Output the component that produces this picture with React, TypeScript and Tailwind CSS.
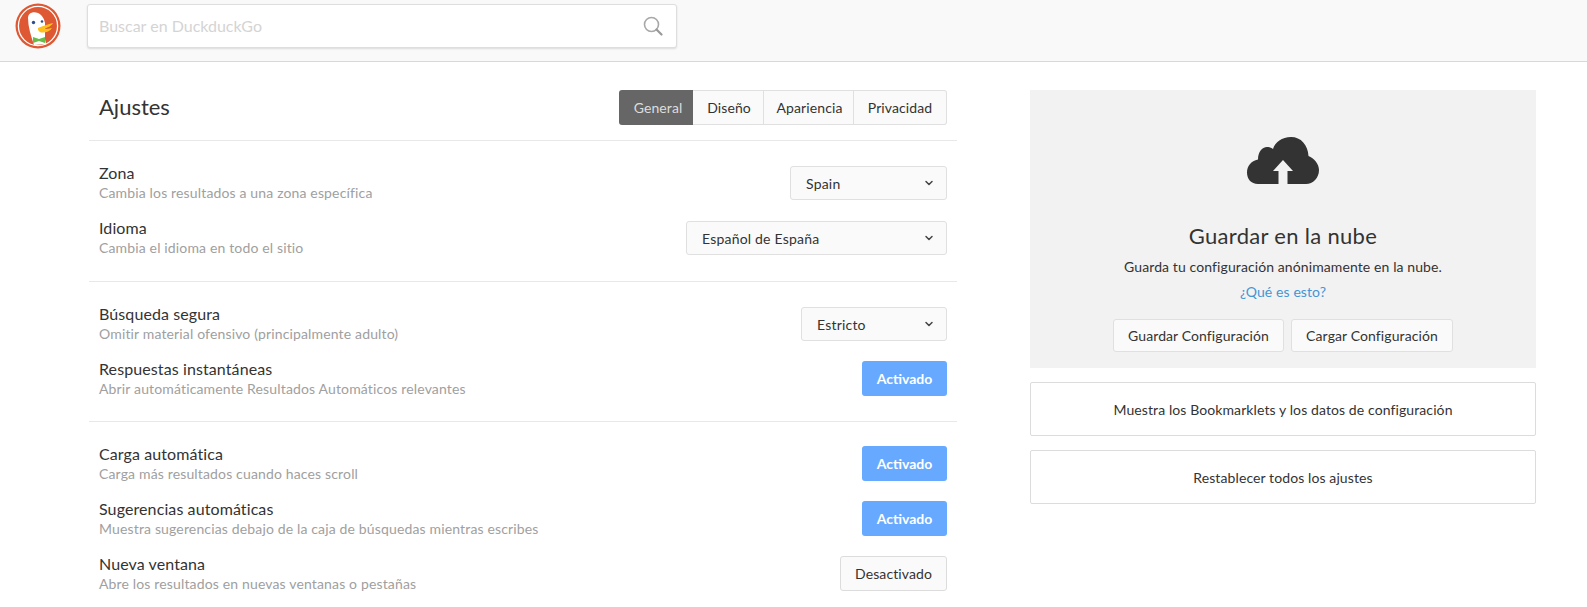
import React from "react";
import { ChevronDown } from "lucide-react";

function Logo() {
  return (
    <svg width="46" height="46" viewBox="0 0 46 46">
      <circle cx="23" cy="23" r="22.500" fill="#de5833" />
      <circle cx="23" cy="23" r="19.600" fill="none" stroke="#fff" strokeWidth="1.300" />
      <path d="M13 15 C13 10 18 8 23 10 C27 12 29 15 30 20 L30 36 L31 41 L19 42 C16 33 13 24 13 15Z" fill="#fff" />
      <circle cx="18.500" cy="19.500" r="1.700" fill="#2d4f8e" />
      <circle cx="27" cy="18.500" r="1.300" fill="#2d4f8e" />
      <path d="M23 25 C28 23 33 21 38 20 C37 22.500 33 24.500 29 26 C32 26 35 25.500 37 25 C35 28.500 30 30 26 29.500 C24 29 22.500 26.500 23 25Z" fill="#fdc018" />
      <path d="M18 34 L24 36 L30 34 L30 40 L24 38 L18 40Z" fill="#65bc46" />
    </svg>
  );
}

function Dropdown({ label, width }: { label: string; width: string }) {
  return (
    <div className={`${width} mt-[1px] h-[34px] flex items-center justify-between pl-[15px] pr-[11px] bg-[#fafafa] border border-[#e0e0e0] rounded-[3px] text-[14px] tracking-[0.2px] text-[#333]`}>
      <span>{label}</span>
      <ChevronDown size={12} strokeWidth={3} className="text-[#444]" />
    </div>
  );
}

function Toggle({ on }: { on: boolean }) {
  return on ? (
    <div className="w-[85px] h-[35px] flex items-center justify-center bg-[#66a9ff] rounded-[3px] text-[14px] font-bold tracking-normal text-white">Activado</div>
  ) : (
    <div className="w-[107px] h-[35px] flex items-center justify-center bg-[#fafafa] border border-[#dcdcdc] rounded-[3px] text-[14px] tracking-[0.1px] text-[#333]">Desactivado</div>
  );
}

function Row({ title, desc, children }: { title: string; desc: string; children: React.ReactNode }) {
  return (
    <div className="h-[55px] flex items-start justify-between pl-[10px] pr-[10px]">
      <div>
        <div className="text-[16px] leading-[20px] tracking-[0.1px] text-[#333]">{title}</div>
        <div className="text-[14px] leading-[20px] tracking-[0.15px] text-[#a0a0a0]">{desc}</div>
      </div>
      <div className="pt-[2px]">{children}</div>
    </div>
  );
}

const tabs = ["Diseño", "Apariencia", "Privacidad"];

export default function App() {
  return (
    <div className="w-[1587px] h-[607px] overflow-hidden bg-white font-['Lato','Liberation_Sans',sans-serif] tracking-[0.1px]">
      <header className="h-[62px] bg-[#f9f9f9] border-b border-[#d8d8d8] flex pl-[15px] pt-[3px]">
        <Logo />
        <div className="ml-[26px] mt-[1px] w-[590px] h-[44px] bg-white border border-[#dedede] rounded-[3px] shadow-[0_1px_2px_rgba(0,0,0,0.12)] flex items-center justify-between pl-[11px] pr-[13px]">
          <span className="text-[16px] tracking-normal text-[#d4d4d4]">Buscar en DuckduckGo</span>
          <svg width="20" height="20" viewBox="0 0 20 20" fill="none">
            <circle cx="8.500" cy="8.500" r="7" stroke="#a8a8a8" strokeWidth="1.600" />
            <path d="M13.500 13.500 L18.500 18.500" stroke="#9a9a9a" strokeWidth="2.200" strokeLinecap="round" />
          </svg>
        </div>
      </header>

      <main className="flex pl-[89px] pt-[28px]">
        <section className="w-[868px]">
          <div className="h-[50px] flex items-start justify-between pl-[10px] pr-[10px] border-b border-[#e8e8e8] box-content">
            <h1 className="text-[22px] leading-[34px] tracking-normal text-[#333]">Ajustes</h1>
            <div className="flex h-[35px] text-[14px] text-[#333]">
              <div className="w-[74px] pl-[4px] flex items-center justify-center bg-[#666] text-[#ddd] rounded-l-[3px]">General</div>
              {tabs.map((t, i) => (
                <div
                  key={t}
                  className={
                    i === 0
                      ? "w-[71px] pl-[2px] flex items-center justify-center bg-[#fafafa] border-y border-r border-[#e0e0e0]"
                      : i === 1
                        ? "w-[90px] pl-[2px] flex items-center justify-center bg-[#fafafa] border-y border-r border-[#e0e0e0]"
                        : "w-[93px] flex items-center justify-center bg-[#fafafa] border-y border-r border-[#e0e0e0] rounded-r-[3px]"
                  }
                >
                  {t}
                </div>
              ))}
            </div>
          </div>

          <div className="pt-[22px] h-[118px] border-b border-[#e8e8e8] box-content">
            <Row title="Zona" desc="Cambia los resultados a una zona específica">
              <Dropdown label="Spain" width="w-[157px]" />
            </Row>
            <Row title="Idioma" desc="Cambia el idioma en todo el sitio">
              <Dropdown label="Español de España" width="w-[261px]" />
            </Row>
          </div>

          <div className="pt-[22px] h-[117px] border-b border-[#e8e8e8] box-content">
            <Row title="Búsqueda segura" desc="Omitir material ofensivo (principalmente adulto)">
              <Dropdown label="Estricto" width="w-[146px]" />
            </Row>
            <Row title="Respuestas instantáneas" desc="Abrir automáticamente Resultados Automáticos relevantes">
              <Toggle on />
            </Row>
          </div>

          <div className="pt-[22px]">
            <Row title="Carga automática" desc="Carga más resultados cuando haces scroll">
              <Toggle on />
            </Row>
            <Row title="Sugerencias automáticas" desc="Muestra sugerencias debajo de la caja de búsquedas mientras escribes">
              <Toggle on />
            </Row>
            <Row title="Nueva ventana" desc="Abre los resultados en nuevas ventanas o pestañas">
              <Toggle on={false} />
            </Row>
          </div>
        </section>

        <aside className="ml-[73px] w-[506px] flex flex-col gap-[14px]">
          <div className="h-[278px] bg-[#f2f2f2] flex flex-col items-center pt-[47px]">
            <svg width="72" height="47" viewBox="0 0 72 47">
              <path d="M11 47 C4 47 0 42 0 35.500 C0 29 4 24 11 22.500 C11 15 15 10 20 10 C22 10 24 10.500 26 12 C28 5 35 0 44 0 C54 0 61 8 61.500 19 C67 21 72 27 72 33 C72 41 66 47 59 47 L40.500 47 L40.500 34 L46 34 L36 23 L26 34 L31.500 34 L31.500 47Z" fill="#333" />
            </svg>
            <h2 className="mt-[37px] text-[22px] leading-[30px] tracking-[0.3px] text-[#333]">Guardar en la nube</h2>
            <p className="mt-[6px] text-[14px] leading-[20px] text-[#333]">Guarda tu configuración anónimamente en la nube.</p>
            <a className="mt-[5px] text-[14px] leading-[20px] text-[#4495d4]">¿Qué es esto?</a>
            <div className="mt-[17px] flex gap-[7px]">
              <div className="w-[171px] h-[33px] flex items-center justify-center bg-[#fafafa] border border-[#e0e0e0] rounded-[3px] text-[14px] text-[#333]">Guardar Configuración</div>
              <div className="w-[162px] h-[33px] flex items-center justify-center bg-[#fafafa] border border-[#e0e0e0] rounded-[3px] text-[14px] text-[#333]">Cargar Configuración</div>
            </div>
          </div>
          <div className="h-[54px] flex items-center justify-center border border-[#dcdcdc] rounded-[2px] text-[14px] text-[#333]">Muestra los Bookmarklets y los datos de configuración</div>
          <div className="h-[54px] flex items-center justify-center border border-[#dcdcdc] rounded-[2px] text-[14px] text-[#333]">Restablecer todos los ajustes</div>
        </aside>
      </main>
    </div>
  );
}
